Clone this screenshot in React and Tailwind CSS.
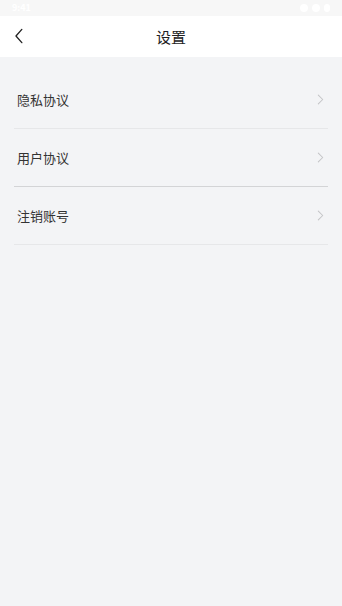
import React from 'react'

const ITEMS = [
  { label: '隐私协议', line: 'bg-[#e6e7e9]' },
  { label: '用户协议', line: 'bg-[#d3d4d6]' },
  { label: '注销账号', line: 'bg-[#e6e7e9]' },
]

function Chevron({ className }){
  return (
    <svg viewBox="0 0 8 12" className={className} fill="none" stroke="currentColor" strokeWidth="1.2" strokeLinecap="round" strokeLinejoin="round">
      <path d="M1.5 1 L6.5 6 L1.5 11" />
    </svg>
  )
}

export default function App(){
  return (
    <div className="min-h-[606px] w-full bg-[#f3f4f6] flex flex-col" style={{ fontFamily: '"Noto Sans CJK SC", "Noto Sans", sans-serif' }}>
      {/* status bar */}
      <div className="h-4 bg-[#f7f7f7] flex items-center justify-between px-3 text-[9px] text-white font-bold">
        <span>9:41</span>
        <div className="flex items-center gap-1">
          <span className="w-2 h-2 bg-white rounded-sm"></span>
          <span className="w-2 h-2 bg-white rounded-sm"></span>
          <span className="w-1.5 h-2 bg-white rounded-sm"></span>
        </div>
      </div>

      {/* header */}
      <div className="h-[41px] bg-white relative flex items-center justify-center">
        <button className="absolute left-[14px] top-[12px] text-[#222]">
          <svg viewBox="0 0 10 18" className="w-[10px] h-[17px]" fill="none" stroke="currentColor" strokeWidth="1.4" strokeLinecap="round" strokeLinejoin="round">
            <path d="M8 1.5 L1.8 8.5 L8 15.5" />
          </svg>
        </button>
        <div className="text-[15px] text-[#222] leading-none">设置</div>
      </div>

      {/* list */}
      <div className="pt-[14px] px-[14px]">
        {ITEMS.map(it=> (
          <div key={it.label}>
            <div className="h-[57px] flex items-center justify-between pl-[3px] pr-[4px]">
              <span className="text-[13px] text-[#333]">{it.label}</span>
              <Chevron className="w-[7px] h-[11px] text-[#c4c5c7]" />
            </div>
            <div className={`h-px ${it.line}`}></div>
          </div>
        ))}
      </div>
    </div>
  )
}
